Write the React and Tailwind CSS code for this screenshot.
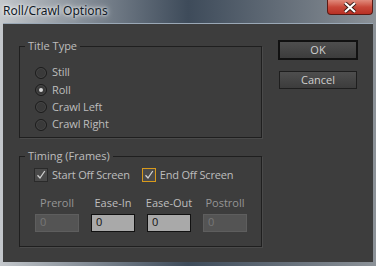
import React from 'react';

const font = { fontFamily: '"Open Sans", "Noto Sans", sans-serif' };

function Radio({ label, checked }) {
  return (
    <div className="flex items-center h-[17.3px]">
      <span className="w-[12px] h-[12px] rounded-full border border-[#1c1c1c] bg-[#3a3a3a] shadow-[inset_0_0_0_1px_#474747] flex items-center justify-center">
        {checked && <span className="w-[4px] h-[4px] rounded-full bg-[#d8d8d8]" />}
      </span>
      <span className="ml-[5px] text-[11px] text-[#bdbdbd] tracking-[-0.1px]">{label}</span>
    </div>
  );
}

function Check({ label, focus }) {
  return (
    <div className="flex items-center">
      <span className={`w-[14px] h-[14px] flex items-center justify-center border ${focus ? 'border-[#d89a1c]' : 'border-[#2a2a2a]'} bg-[#2e2e2e]`}>
        <span className="w-[12px] h-[12px] bg-[#4a4a4a] flex items-center justify-center">
          <svg width="10" height="10" viewBox="0 0 10 10">
            <path d="M1.5 5.2 L4 8 L8.8 1" stroke="#cfcfcf" strokeWidth="1.3" fill="none" />
          </svg>
        </span>
      </span>
      <span className="ml-[4px] text-[11px] text-[#bdbdbd] tracking-[-0.2px]">{label}</span>
    </div>
  );
}

function Field({ label, disabled }) {
  return (
    <div className="flex flex-col items-center w-[44px]">
      <span className={`whitespace-nowrap text-[11px] leading-[14px] ${disabled ? 'text-[#959595]' : 'text-[#bdbdbd]'}`}>{label}</span>
      <div
        className={`mt-[4px] w-[44px] h-[18px] px-[4px] flex items-center text-[11px] border ${
          disabled ? 'bg-[#545454] border-[#5e5e5e] text-[#777]' : 'bg-[#a9a9a9] border-[#111] text-[#111]'
        }`}
      >
        0
      </div>
    </div>
  );
}

export default function App() {
  return (
    <div className="w-[376px] h-[266px] relative overflow-hidden bg-linear-to-r from-[#c4c8cc] via-[#3e4b5a] to-[#8c9298]" style={font}>
      {/* title bar */}
      <div className="h-[23px] flex items-start pl-[3px] pt-[2px]">
        <span
          className="text-[12px] text-[#111a26] [text-shadow:0_0_6px_#fff,0_0_3px_#fff]"
          style={{ fontFamily: '"Noto Sans", "Open Sans", sans-serif' }}
        >
          Roll/Crawl Options
        </span>
      </div>
      <div className="absolute top-0 left-[327px] w-[46px] h-[15px] rounded-b-[4px] border border-t-0 border-[#5a1a14] bg-linear-to-b from-[#e08a7c] via-[#c8483a] to-[#b83024] flex items-center justify-center">
        <svg width="14" height="11" viewBox="0 0 14 11">
          <path d="M2 1 L12 10 M12 1 L2 10" stroke="#3a1a16" strokeWidth="4" />
          <path d="M2 1 L12 10 M12 1 L2 10" stroke="#ffffff" strokeWidth="2.2" />
        </svg>
      </div>

      {/* client area */}
      <div className="mx-[3px] h-[239px] w-[370px] bg-[#3d3d3d] border-t border-[#9aa8b6] flex pt-[10px] pl-[16px]">
        <div className="flex flex-col w-[243px]">
          <div className="relative border border-[#1f1f1f] shadow-[1px_1px_0_#4a4a4a] h-[92px] mt-[12px] pl-[15px] pt-[17px]">
            <span className="absolute -top-[8px] left-[5px] bg-[#3d3d3d] px-[3px] text-[11px] text-[#bdbdbd] leading-[14px]">Title Type</span>
            <Radio label="Still" />
            <Radio label="Roll" checked />
            <Radio label="Crawl Left" />
            <Radio label="Crawl Right" />
          </div>
          <div className="relative border border-[#1f1f1f] shadow-[1px_1px_0_#4a4a4a] h-[91px] mt-[18px] pl-[14px] pt-[10px]">
            <span className="absolute -top-[8px] left-[5px] bg-[#3d3d3d] px-[3px] text-[11px] text-[#bdbdbd] leading-[14px]">Timing (Frames)</span>
            <div className="flex gap-[12px]">
              <Check label="Start Off Screen" />
              <Check label="End Off Screen" focus />
            </div>
            <div className="flex gap-[12px] mt-[12px] pl-[1px]">
              <Field label="Preroll" disabled />
              <Field label="Ease-In" />
              <Field label="Ease-Out" />
              <Field label="Postroll" disabled />
            </div>
          </div>
        </div>
        <div className="flex flex-col ml-[16px] pt-[6px] gap-[11px]">
          <button className="w-[80px] h-[20px] border-2 border-[#111] bg-linear-to-b from-[#4e4e4e] to-[#3c3c3c] text-[11px] text-[#cfcfcf] flex items-center justify-center">OK</button>
          <button className="ml-[1px] w-[78px] h-[18px] border border-[#1e1e1e] bg-linear-to-b from-[#4e4e4e] to-[#3c3c3c] text-[11px] text-[#cfcfcf] flex items-center justify-center">Cancel</button>
        </div>
      </div>
    </div>
  );
}
